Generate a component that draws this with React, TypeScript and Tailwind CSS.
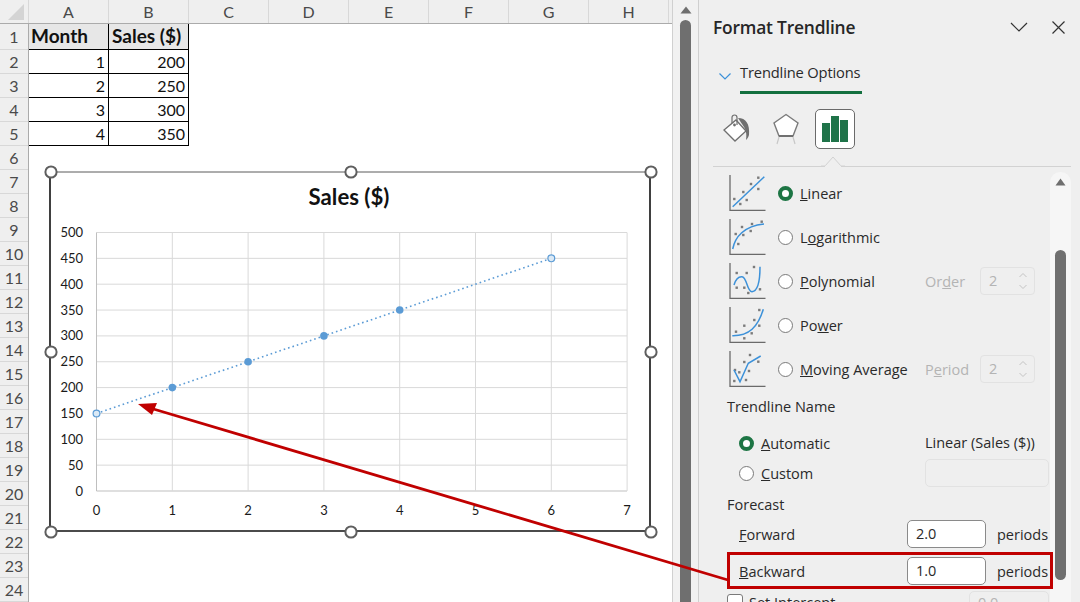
import React from "react";

const cols = ["A", "B", "C", "D", "E", "F", "G", "H"];
const rows = Array.from({ length: 24 }, (_, i) => i + 1);
const data = [[1, 200], [2, 250], [3, 300], [4, 350]];

function Chart() {
  const X = (v: number) => 96.5 + v * 75.8;
  const Y = (v: number) => 491 - (v / 50) * 25.85;
  const filled = [1, 2, 3, 4];
  const handles: [number, number][] = [[51, 172], [351, 172], [651, 172], [51, 352], [651, 352], [51, 532], [351, 532], [651, 532]];
  return (
    <svg className="absolute left-0 top-0" width="672" height="602" viewBox="0 0 672 602" style={{ fontFamily: "Lato, sans-serif" }}>
      <rect x="50" y="172" width="600" height="359" fill="#fff" />
      <path d="M50 172H650" stroke="#5a5a5a" strokeWidth="1" />
      <path d="M50 172V531H650V172" stroke="#111" strokeWidth="1.6" fill="none" />
      {[0, 50, 100, 150, 200, 250, 300, 350, 400, 450, 500].map((v) => (
        <g key={v}>
          <line x1="96.5" x2="627" y1={Y(v)} y2={Y(v)} stroke={v === 0 ? "#bfbfbf" : "#d9d9d9"} strokeWidth="1" />
          <text x="83" y={Y(v) + 4.5} textAnchor="end" fontSize="13" fill="#1a1a1a">{v}</text>
        </g>
      ))}
      {[0, 1, 2, 3, 4, 5, 6, 7].map((v) => (
        <g key={v}>
          <line x1={X(v)} x2={X(v)} y1="232.5" y2="491" stroke={v === 0 ? "#bfbfbf" : "#d9d9d9"} strokeWidth="1" />
          <text x={X(v)} y="515" textAnchor="middle" fontSize="13" fill="#1a1a1a">{v}</text>
        </g>
      ))}
      <text x="349" y="205" textAnchor="middle" fontSize="22.2" fontWeight="700" fill="#111">Sales ($)</text>
      <line x1={X(0)} y1={Y(150)} x2={X(6)} y2={Y(450)} stroke="#5b9bd5" strokeWidth="1.6" strokeDasharray="1.6 3" />
      {filled.map((v) => (
        <circle key={v} cx={X(v)} cy={Y(150 + v * 50)} r="3.8" fill="#5b9bd5" />
      ))}
      {[0, 6].map((v) => (
        <circle key={v} cx={X(v)} cy={Y(150 + v * 50)} r="3.4" fill="#dbe9f5" stroke="#5b9bd5" strokeWidth="1.2" />
      ))}
      {handles.map(([x, y], i) => (
        <circle key={i} cx={x} cy={y} r="5.6" fill="#fff" stroke="#5f5f5f" strokeWidth="2" />
      ))}
    </svg>
  );
}

function Sheet() {
  return (
    <div className="relative w-[673px] h-[602px] bg-white border-r border-[#d0d0d0] shrink-0 overflow-hidden">
      <div className="flex h-[24px] bg-[#efefef] border-b border-[#ababab]">
        <div className="w-[29px] h-[23px] relative border-r border-[#d8d8d8]">
          <svg className="absolute right-[4px] bottom-[3px]" width="16" height="16" viewBox="0 0 16 16">
            <path d="M16 0V16H0Z" fill="#d4d4d4" />
          </svg>
        </div>
        {cols.map((c) => (
          <div key={c} className="w-[80px] h-[23px] flex items-center justify-center text-[16px] text-[#4a4a4a] border-r border-[#d8d8d8]">{c}</div>
        ))}
      </div>
      <div className="flex h-[578px]">
        <div className="w-[29px] bg-[#efefef] border-r border-[#ababab] shrink-0">
          {rows.map((r) => (
            <div key={r} className={(r === 1 ? "h-[26px] " : "h-[24px] ") + "flex items-center justify-center text-[16px] text-[#4a4a4a] border-b border-[#d8d8d8]"}>{r}</div>
          ))}
        </div>
        <div className="w-[160px] text-[16px] text-[#111]">
          <div className="flex h-[26px] font-bold bg-[#e7e7e7] border-b border-black text-[19px]">
            <div className="w-[80px] flex items-center pl-[2px] border-r border-black">Month</div>
            <div className="w-[80px] flex items-center pl-[3px] border-r border-black whitespace-nowrap">Sales ($)</div>
          </div>
          {data.map(([a, b]) => (
            <div key={a} className="flex h-[24px] border-b border-black">
              <div className="w-[80px] flex items-center justify-end pr-[3px] border-r border-black">{a}</div>
              <div className="w-[80px] flex items-center justify-end pr-[3px] border-r border-black">{b}</div>
            </div>
          ))}
        </div>
      </div>
      <Chart />
    </div>
  );
}

function MainScrollbar() {
  return (
    <div className="w-[26px] h-[602px] shrink-0 bg-[#f1f1f1] border-r border-[#cfcfcf] flex flex-col items-center">
      <svg className="mt-[6px]" width="12" height="8" viewBox="0 0 12 8"><path d="M6 0.5L11.5 7.5H0.5Z" fill="#6f6f6f" /></svg>
      <div className="w-[11px] flex-1 mt-[6px] bg-[#6f6f6f] rounded-t-[6px]" />
    </div>
  );
}

const dot = "#7b7b7b";
function Trend({ line, dots }: { line: string; dots: [number, number][] }) {
  return (
    <svg width="37" height="37" viewBox="0 0 37 37" className="shrink-0">
      <path d="M1 0V35.3H36.5" fill="none" stroke="#6a6a6a" strokeWidth="1.3" />
      {dots.map(([x, y], i) => (
        <rect key={i} x={x - 1.2} y={y - 1.2} width="2.4" height="2.4" fill={dot} />
      ))}
      <path d={line} fill="none" stroke="#3c91d9" strokeWidth="1.5" />
    </svg>
  );
}

function Radio({ on, className }: { on?: boolean; className?: string }) {
  return (
    <span
      className={
        (on ? "border-[4px] border-[#1d7544] " : "border border-[#7a7a7a] ") +
        "block w-[15px] h-[15px] rounded-full bg-white shrink-0 " +
        (className ?? "")
      }
    />
  );
}

function Spin({ label, v }: { label: React.ReactNode; v: string }) {
  return (
    <>
      <span className="w-[55px] ml-auto mt-[2px] text-[#b4b4b4]">{label}</span>
      <div className="w-[55px] h-[28px] mr-[18px] rounded-[4px] border border-[#e2e2e2] flex items-center justify-between pl-[8px] pr-[5px] text-[#b4b4b4]">
        <span>{v}</span>
        <svg width="12" height="20" viewBox="0 0 12 20" fill="none" stroke="#c4c4c4" strokeWidth="1"><path d="M2.5 6L6 2.5L9.5 6M2.5 14L6 17.5L9.5 14" /></svg>
      </div>
    </>
  );
}

function TrendRow({ line, dots, on, label, extra }: { line: string; dots: [number, number][]; on?: boolean; label: React.ReactNode; extra?: React.ReactNode }) {
  return (
    <div className="h-[44px] flex items-center pl-[16px]">
      <Trend line={line} dots={dots} />
      <Radio on={on} className="ml-[12px]" />
      <span className="ml-[7px] mt-[2px] whitespace-nowrap">{label}</span>
      {extra}
    </div>
  );
}

function Periods({ label, v }: { label: React.ReactNode; v: string }) {
  return (
    <>
      <span className="mt-[2px]">{label}</span>
      <span className="ml-auto w-[79px] h-[28px] bg-white rounded-[5px] border border-[#8a8a8a] flex items-center pl-[8px]">{v}</span>
      <span className="ml-[11px] w-[50px] mt-[2px]">periods</span>
    </>
  );
}

function Panel() {
  return (
    <div className="relative flex-1 h-[602px] bg-[#efefef] text-[14.5px] text-[#2a2a2a] flex flex-col overflow-hidden" style={{ fontFamily: "'Open Sans', sans-serif" }}>
      <div className="h-[54px] shrink-0 flex items-center pl-[14px] pr-[15px]">
        <span className="text-[17.4px] font-semibold text-[#262626] tracking-[-0.2px]">Format Trendline</span>
        <svg className="ml-auto" width="18" height="10" viewBox="0 0 18 10" fill="none" stroke="#333" strokeWidth="1.2"><path d="M1 1L9 9L17 1" /></svg>
        <svg className="ml-[24px]" width="13" height="13" viewBox="0 0 13 13" fill="none" stroke="#333" strokeWidth="1.2"><path d="M0.5 0.5L12.5 12.5M12.5 0.5L0.5 12.5" /></svg>
      </div>
      <div className="h-[40px] shrink-0 pl-[20px] flex items-start">
        <svg className="mt-[19px]" width="12" height="7" viewBox="0 0 12 7" fill="none" stroke="#3c91d9" strokeWidth="1.2"><path d="M0.5 0.5L6 6L11.5 0.5" /></svg>
        <div className="ml-[9px] w-[122px] h-[40px] border-b-[3px] border-[#13703f] text-[14.7px] leading-[36px] whitespace-nowrap tracking-[-0.15px]">Trendline Options</div>
      </div>
      <div className="relative h-[73px] shrink-0 ml-[14px] mr-[9px] border-b border-[#d2d2d2] flex items-start gap-[10px] pt-[15px] pl-[4px]">
        <div className="w-[39px] h-[39px] flex items-center justify-center">
          <svg width="30" height="30" viewBox="0 0 30 30" fill="none">
            <path d="M2 16L14 6L24 17L13 27Z" fill="#fff" stroke="#6f6f6f" strokeWidth="1.3" />
            <path d="M10 9V3.5a2.5 2.5 0 0 1 5 0V11" stroke="#6f6f6f" strokeWidth="1.2" />
            <circle cx="12.5" cy="11" r="1.4" fill="#6f6f6f" />
            <path d="M16 4C24 4 28 10 27 21C26 24 25 25 24 26C25 20 24 15 20 10Z" fill="#6f6f6f" />
          </svg>
        </div>
        <div className="w-[39px] h-[39px] flex items-center justify-center">
          <svg width="28" height="32" viewBox="0 0 28 32" fill="none">
            <path d="M14 1.5L26 10L21 23H7L2 10Z" fill="#fff" stroke="#7b7b7b" strokeWidth="1.4" />
            <path d="M7 23H21" stroke="#707070" strokeWidth="2" />
            <path d="M7 24L5 31M21 24L23 31" stroke="#c8c8c8" strokeWidth="1.2" />
          </svg>
        </div>
        <div className="w-[40px] h-[40px] bg-white rounded-[5px] border border-[#6a6a6a] flex items-end justify-center gap-[1px] pb-[6px]">
          <span className="w-[8px] h-[19px] bg-[#1f7349]" />
          <span className="w-[8px] h-[26px] bg-[#1f7349]" />
          <span className="w-[8px] h-[22px] bg-[#1f7349]" />
        </div>
        <svg className="absolute left-[105px] bottom-[-1px]" width="30" height="11" viewBox="0 0 30 11">
          <path d="M3 10H7L15 1L23 10H27" fill="#efefef" stroke="#d2d2d2" strokeWidth="1" />
          <path d="M7 10.5H23" stroke="#efefef" strokeWidth="1.5" />
        </svg>
      </div>
      <div className="flex-1 flex min-h-0 pl-[14px]">
        <div className="relative z-10 w-[340px] shrink-0 pt-[4px]">
          <TrendRow
            on
            label={<><u>L</u>inear</>}
            line="M3.7 31.7L35.3 1.7"
            dots={[[5.3, 24], [11.3, 29], [17.7, 25], [14.3, 17], [22, 9], [29.3, 14], [29.3, 2.7]]}
          />
          <TrendRow
            label={<>L<u>o</u>garithmic</>}
            line="M3.7 30C6 18 15 7 35 5"
            dots={[[9.3, 25], [6.7, 15], [14.3, 16], [13, 8], [21.7, 12], [23, 5], [32.7, 2.7]]}
          />
          <TrendRow
            label={<><u>P</u>olynomial</>}
            line="M5 22C7 15 10 13.5 13 13.7C18 14 18 29 23 28.7C29 28 31 18 31 3.7"
            dots={[[7.7, 10], [17.7, 10], [25, 4], [7.7, 24.7], [15.3, 24.7], [19.3, 30], [31, 26.3]]}
            extra={<Spin label={<>Or<u>d</u>er</>} v="2" />}
          />
          <TrendRow
            label={<>Po<u>w</u>er</>}
            line="M3.3 28.7C20 29 29 20 34.3 2.3"
            dots={[[7, 24.7], [15.3, 31.3], [15.3, 18.7], [22.7, 26.3], [25.3, 13], [30.3, 18.7], [30.3, 3]]}
          />
          <TrendRow
            label={<><u>M</u>oving Average</>}
            line="M5 19L11 30.7L19.3 12.3L31.7 5"
            dots={[[6, 19], [10.3, 21.3], [5.3, 30], [17, 29], [20, 20], [15.3, 11], [21, 4], [29.3, 10.7]]}
            extra={<Spin label={<>P<u>e</u>riod</>} v="2" />}
          />
          <div className="h-[24px] mt-[4px] ml-[14px] flex items-center">Trendline Name</div>
          <div className="h-[24px] mt-[12px] ml-[26px] flex items-center">
            <Radio on />
            <span className="ml-[7px] mt-[2px]"><u>A</u>utomatic</span>
            <span className="absolute left-[212px] whitespace-nowrap">Linear (Sales ($))</span>
          </div>
          <div className="h-[28px] mt-[4px] ml-[26px] flex items-center">
            <Radio />
            <span className="ml-[7px] mt-[2px]"><u>C</u>ustom</span>
            <span className="ml-auto mr-[4px] w-[124px] h-[28px] rounded-[5px] border border-[#e2e2e2]" />
          </div>
          <div className="h-[24px] mt-[6px] ml-[14px] flex items-center">Forecast</div>
          <div className="h-[28px] mt-[3px] ml-[26px] flex items-center pr-[6px]">
            <Periods label={<><u>F</u>orward</>} v="2.0" />
          </div>
          <div className="h-[37px] mt-[4px] ml-[14px] border-[3px] border-[#c00000] flex items-center pl-[9px] pr-[3px]">
            <Periods label={<><u>B</u>ackward</>} v="1.0" />
          </div>
          <div className="h-[20px] mt-[2px] ml-[14px] flex items-start">
            <span className="w-[16px] h-[16px] mt-[3px] bg-white rounded-[3px] border border-[#7a7a7a]" />
            <span className="ml-[6px] mt-[1px]">Set Intercept</span>
            <span className="ml-auto mr-[4px] w-[80px] h-[28px] rounded-[5px] border border-[#e2e2e2] text-[#b4b4b4] pl-[8px]">0.0</span>
          </div>
        </div>
        <div className="w-[21px] -ml-[3px] mt-[5px] shrink-0 bg-[#f6f6f6] rounded-t-[10px] flex flex-col items-center pt-[6px]">
          <svg width="11" height="8" viewBox="0 0 11 8"><path d="M5.5 0.5L10.5 7.5H0.5Z" fill="#6f6f6f" /></svg>
          <div className="w-[11px] h-[330px] mt-[64px] bg-[#6f6f6f] rounded-[6px]" />
        </div>
      </div>
    </div>
  );
}

export default function App() {
  return (
    <div className="relative w-[1080px] h-[602px] flex overflow-hidden bg-white" style={{ fontFamily: "Lato, sans-serif" }}>
      <Sheet />
      <MainScrollbar />
      <Panel />
      <svg className="absolute left-0 top-0 z-20 pointer-events-none" width="1080" height="602" viewBox="0 0 1080 602">
        <path d="M728 580L150 408" stroke="#c00000" strokeWidth="2.8" fill="none" />
        <path d="M138 404L157 403L152 415Z" fill="#c00000" />
      </svg>
    </div>
  );
}
